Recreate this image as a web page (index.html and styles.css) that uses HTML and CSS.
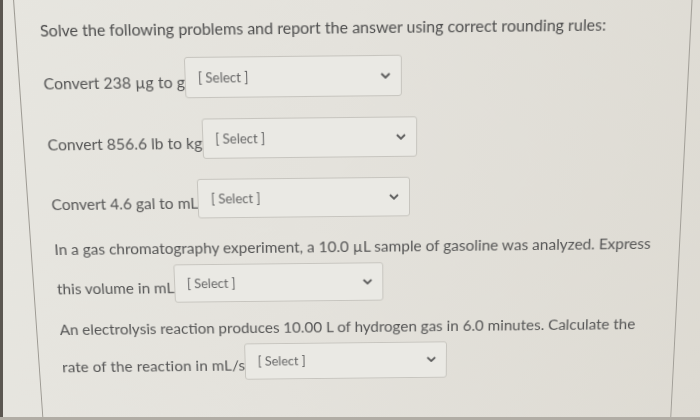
FILE: index.html
```html
<!DOCTYPE html>
<html lang="en">
<head>
<meta charset="utf-8">
<title>Quiz question</title>
<link rel="stylesheet" href="styles.css">
</head>
<body>
<div class="screen">
  <div class="card">
    <p class="heading">Solve the following problems and report the answer using correct rounding rules:</p>

    <div class="row row-1">
      <span class="label">Convert 238 µg to g</span>
      <div class="select"><span class="select-text">[ Select ]</span><svg class="chev" viewBox="0 0 10 6" width="10" height="6"><path d="M1 1 L5 5 L9 1" fill="none" stroke="#5a5a5a" stroke-width="1.8"/></svg></div>
    </div>

    <div class="row row-2">
      <span class="label">Convert 856.6 lb to kg</span>
      <div class="select"><span class="select-text">[ Select ]</span><svg class="chev" viewBox="0 0 10 6" width="10" height="6"><path d="M1 1 L5 5 L9 1" fill="none" stroke="#5a5a5a" stroke-width="1.8"/></svg></div>
    </div>

    <div class="row row-3">
      <span class="label">Convert 4.6 gal to mL</span>
      <div class="select"><span class="select-text">[ Select ]</span><svg class="chev" viewBox="0 0 10 6" width="10" height="6"><path d="M1 1 L5 5 L9 1" fill="none" stroke="#5a5a5a" stroke-width="1.8"/></svg></div>
    </div>

    <div class="para para-1">
      <span class="line">In a gas chromatography experiment, a 10.0 µL sample of gasoline was analyzed. Express</span>
      <div class="row row-inline">
        <span class="label">this volume in mL</span>
        <div class="select"><span class="select-text">[ Select ]</span><svg class="chev" viewBox="0 0 10 6" width="10" height="6"><path d="M1 1 L5 5 L9 1" fill="none" stroke="#5a5a5a" stroke-width="1.8"/></svg></div>
      </div>
    </div>

    <div class="para para-2">
      <span class="line">An electrolysis reaction produces 10.00 L of hydrogen gas in 6.0 minutes. Calculate the</span>
      <div class="row row-inline">
        <span class="label label-wide">rate of the reaction in mL/s</span>
        <div class="select select-narrow"><span class="select-text">[ Select ]</span><svg class="chev" viewBox="0 0 10 6" width="10" height="6"><path d="M1 1 L5 5 L9 1" fill="none" stroke="#5a5a5a" stroke-width="1.8"/></svg></div>
      </div>
    </div>
  </div>
</div>
</body>
</html>
```
FILE: styles.css
```css
html, body {
  margin: 0;
  padding: 0;
  width: 700px;
  height: 420px;
  overflow: hidden;
  background: #dfddd6;
}

body {
  font-family: Lato, "Open Sans", "Noto Sans", sans-serif;
  color: #565656;
}

body::before {
  content: "";
  position: fixed;
  left: 0;
  top: 0;
  bottom: 0;
  width: 3px;
  background: #5b5751;
  z-index: 5;
}

body::after {
  content: "";
  position: fixed;
  left: 0;
  right: 0;
  bottom: 0;
  height: 3px;
  background: #b1ada5;
  z-index: 5;
}

.screen {
  width: 760px;
  height: 480px;
  margin-left: -30px;
  background: linear-gradient(100deg, #e7e6e0 0%, #e4e2dc 45%, #dddad2 100%);
  transform-origin: 380px 210px;
  transform: perspective(1000px) rotate(-0.6deg) rotateX(-10.5deg);
  filter: blur(0.35px);
}

.card {
  margin-left: 58px;
  width: 654px;
  height: 480px;
  border-left: 1px solid #9d9a93;
  border-right: 1px solid #a29f98;
  padding: 20px 0 0 23px;
  box-sizing: border-box;
}

.heading {
  margin: 0;
  font-size: 15.5px;
  line-height: 20px;
  color: #4e4e4e;
  white-space: nowrap;
}

.row {
  display: flex;
  align-items: flex-end;
}

.row-1 { margin-top: 17px; }
.row-2 { margin-top: 20px; }
.row-3 { margin-top: 20px; }

.label {
  font-size: 15.5px;
  line-height: 20px;
  padding-bottom: 6px;
  white-space: nowrap;
}

.label-wide {
  letter-spacing: 0.15px;
}

.select {
  width: 212px;
  height: 40px;
  box-sizing: border-box;
  border: 1px solid #c7c5bf;
  border-radius: 3px;
  background: #eae9e4;
  display: flex;
  align-items: center;
  justify-content: space-between;
  padding: 0 10px 1px 12px;
}

.select-narrow {
  width: 208px;
  height: 39px;
}

.select-text {
  font-size: 13px;
  color: #666;
}

.chev {
  display: block;
}

.para-1 { margin-top: 20px; }
.para-2 { margin-top: 17px; }

.line {
  display: block;
  font-size: 15.5px;
  line-height: 20px;
  white-space: nowrap;
}

.row-inline { margin-top: 7px; }
```
